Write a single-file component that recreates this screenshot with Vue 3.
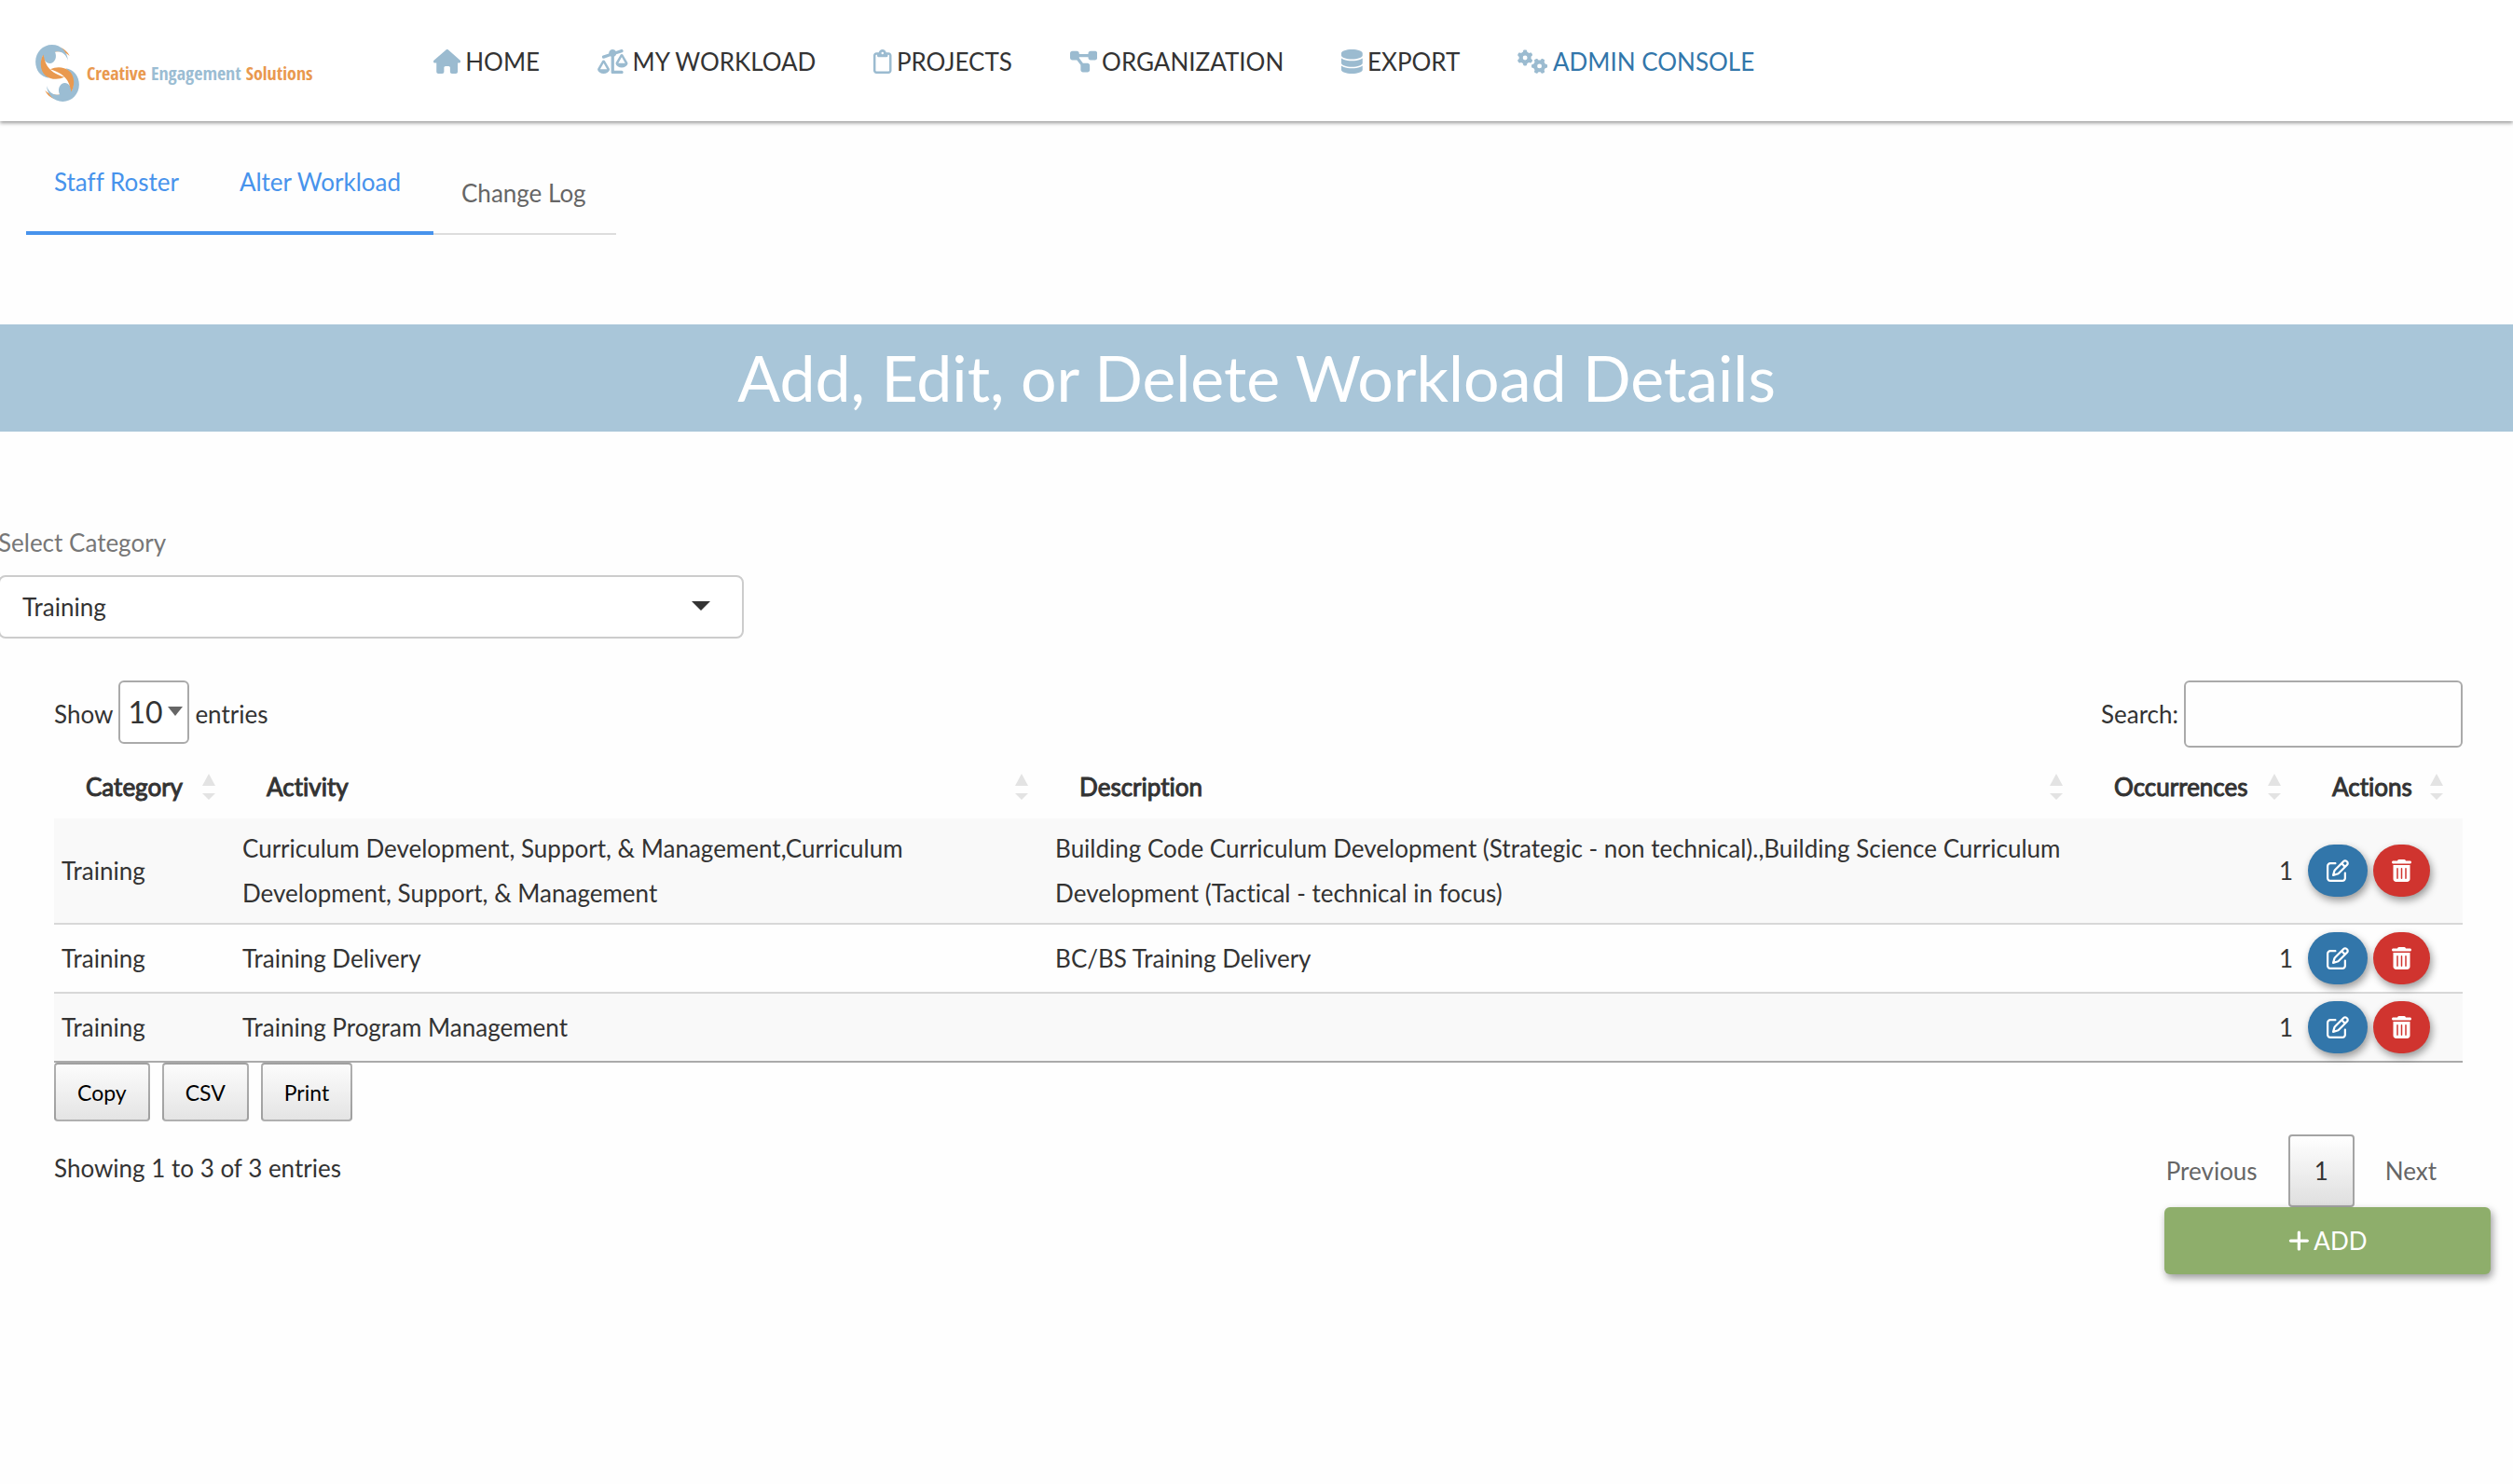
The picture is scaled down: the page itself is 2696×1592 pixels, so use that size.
<script setup>
import { ref } from 'vue'

const icons = {
  home: { w: 576, d: 'M575.8 255.5c0 18-15 32.1-32 32.1h-32l.7 160.2c0 2.7-.2 5.4-.5 8.1V472c0 22.1-17.9 40-40 40H456c-1.1 0-2.2 0-3.3-.1c-1.4 .1-2.8 .1-4.2 .1H416 392c-22.1 0-40-17.9-40-40V448 384c0-17.7-14.3-32-32-32H256c-17.7 0-32 14.3-32 32v64 24c0 22.1-17.9 40-40 40H160 128.1c-1.5 0-3-.1-4.5-.2c-1.2 .1-2.4 .2-3.6 .2H104c-22.1 0-40-17.9-40-40V360c0-.9 0-1.9 .1-2.8V287.6H32c-18 0-32-14-32-32.1c0-9 3-17 10-24L266.4 8c7-7 15-8 22-8s15 2 21 7L564.8 231.5c8 7 12 15 11 24z' },
  scale: { w: 640, d: 'M522.1 62.4c16.8-5.6 25.8-23.7 20.2-40.5S518.6-3.9 501.9 1.6l-113 37.7C375 15.8 349.3 0 320 0c-44.2 0-80 35.8-80 80c0 3 .2 5.9 .5 8.8L117.9 129.6c-16.8 5.6-25.8 23.7-20.2 40.5s23.7 25.8 40.5 20.2l135.5-45.2c4.5 3.2 9.3 5.9 14.4 8.2V480c0 17.7 14.3 32 32 32H512c17.7 0 32-14.3 32-32s-14.3-32-32-32H352V153.3c21-9.2 37.2-27 44.2-49l125.9-42zM439.6 288L512 163.8 584.4 288H439.6zM512 384c62.9 0 115.2-34 126-78.9c2.6-11-1-22.3-6.7-32.1L536.1 109.8c-5-8.6-14.2-13.8-24.1-13.8s-19.1 5.3-24.1 13.8L392.7 273.1c-5.7 9.8-9.3 21.1-6.7 32.1C396.8 350 449.1 384 512 384zM129.2 291.8L201.6 416H56.7l72.4-124.2zM3.2 433.1C14 478 66.3 512 129.2 512s115.2-34 126-78.9c2.6-11-1-22.3-6.7-32.1L153.2 237.8c-5-8.6-14.2-13.8-24.1-13.8s-19.1 5.3-24.1 13.8L9.9 401.1c-5.7 9.8-9.3 21.1-6.7 32.1z' },
  clipboard: { w: 384, d: 'M280 64h40c35.3 0 64 28.7 64 64V448c0 35.3-28.7 64-64 64H64c-35.3 0-64-28.7-64-64V128C0 92.7 28.7 64 64 64h40 9.6C121 27.5 153.3 0 192 0s71 27.5 78.4 64H280zM64 112c-8.8 0-16 7.2-16 16V448c0 8.8 7.2 16 16 16H320c8.8 0 16-7.2 16-16V128c0-8.8-7.2-16-16-16H304v24c0 13.3-10.7 24-24 24H192 104c-13.3 0-24-10.7-24-24V112H64zm128-8a24 24 0 1 0 0-48 24 24 0 1 0 0 48z' },
  diagram: { w: 576, d: 'M0 80C0 53.5 21.5 32 48 32h96c26.5 0 48 21.5 48 48V96H384V80c0-26.5 21.5-48 48-48h96c26.5 0 48 21.5 48 48v96c0 26.5-21.5 48-48 48H432c-26.5 0-48-21.5-48-48V160H192v16c0 1.7-.1 3.4-.3 5L272 288h96c26.5 0 48 21.5 48 48v96c0 26.5-21.5 48-48 48H272c-26.5 0-48-21.5-48-48V336c0-1.7 .1-3.4 .3-5L144 224H48c-26.5 0-48-21.5-48-48V80z' },
  database: { w: 448, d: 'M448 80v48c0 44.2-100.3 80-224 80S0 172.2 0 128V80C0 35.8 100.3 0 224 0S448 35.8 448 80zM393.2 214.7c20.8-7.4 39.9-16.9 54.8-28.6V288c0 44.2-100.3 80-224 80S0 332.2 0 288V186.1c14.9 11.8 34 21.2 54.8 28.6C99.7 230.7 159.5 240 224 240s124.3-9.3 169.2-25.3zM0 346.1c14.9 11.8 34 21.2 54.8 28.6C99.7 390.7 159.5 400 224 400s124.3-9.3 169.2-25.3c20.8-7.4 39.9-16.9 54.8-28.6V432c0 44.2-100.3 80-224 80S0 476.2 0 432V346.1z' },
  gears: { w: 640, d: 'M308.5 135.3c7.1-6.3 9.9-16.2 6.2-25c-2.3-5.3-4.8-10.5-7.6-15.5L304 89.4c-3-5-6.3-9.9-9.8-14.6c-5.7-7.6-15.7-10.1-24.7-7.1l-28.2 9.3c-10.7-8.8-23-16-36.2-20.9L199 27.1c-1.9-9.3-9.1-16.7-18.5-17.8C173.9 8.4 167.2 8 160.4 8h-.7c-6.8 0-13.5 .4-20.1 1.2c-9.4 1.1-16.6 8.6-18.5 17.8L115 56.1c-13.3 5-25.5 12.1-36.2 20.9L50.5 67.8c-9-3-19-.5-24.7 7.1c-3.5 4.7-6.8 9.6-9.9 14.6l-3 5.3c-2.8 5-5.3 10.2-7.6 15.6c-3.7 8.7-.9 18.6 6.2 25l22.2 19.8C32.6 161.9 32 168.9 32 176s.6 14.1 1.7 20.9L11.5 216.7c-7.1 6.3-9.9 16.2-6.2 25c2.3 5.3 4.8 10.5 7.6 15.6l3 5.2c3 5.1 6.3 9.9 9.9 14.6c5.7 7.6 15.7 10.1 24.7 7.1l28.2-9.3c10.7 8.8 23 16 36.2 20.9l6.1 29.1c1.9 9.3 9.1 16.7 18.5 17.8c6.7 .8 13.5 1.2 20.4 1.2s13.7-.4 20.4-1.2c9.4-1.1 16.6-8.6 18.5-17.8l6.1-29.1c13.3-5 25.5-12.1 36.2-20.9l28.2 9.3c9 3 19 .5 24.7-7.1c3.5-4.7 6.8-9.5 9.8-14.6l3.1-5.4c2.8-5 5.3-10.2 7.6-15.5c3.7-8.7 .9-18.6-6.2-25l-22.2-19.8c1.1-6.8 1.7-13.8 1.7-20.9s-.6-14.1-1.7-20.9l22.2-19.8zM112 176a48 48 0 1 1 96 0 48 48 0 1 1 -96 0zM504.7 500.5c6.3 7.1 16.2 9.9 25 6.2c5.3-2.3 10.5-4.8 15.5-7.6l5.4-3.1c5-3 9.9-6.3 14.6-9.8c7.6-5.7 10.1-15.7 7.1-24.7l-9.3-28.2c8.8-10.7 16-23 20.9-36.2l29.1-6.1c9.3-1.9 16.7-9.1 17.8-18.5c.8-6.7 1.2-13.5 1.2-20.4s-.4-13.7-1.2-20.4c-1.1-9.4-8.6-16.6-17.8-18.5L583.9 307c-5-13.3-12.1-25.5-20.9-36.2l9.3-28.2c3-9 .5-19-7.1-24.7c-4.7-3.5-9.6-6.8-14.6-9.9l-5.3-3c-5-2.8-10.2-5.3-15.6-7.6c-8.7-3.7-18.6-.9-25 6.2l-19.8 22.2c-6.8-1.1-13.8-1.7-20.9-1.7s-14.1 .6-20.9 1.7l-19.8-22.2c-6.3-7.1-16.2-9.9-25-6.2c-5.3 2.3-10.5 4.8-15.6 7.6l-5.2 3c-5.1 3-9.9 6.3-14.6 9.9c-7.6 5.7-10.1 15.7-7.1 24.7l9.3 28.2c-8.8 10.7-16 23-20.9 36.2L315.1 313c-9.3 1.9-16.7 9.1-17.8 18.5c-.8 6.7-1.2 13.5-1.2 20.4s.4 13.7 1.2 20.4c1.1 9.4 8.6 16.6 17.8 18.5l29.1 6.1c5 13.3 12.1 25.5 20.9 36.2l-9.3 28.2c-3 9-.5 19 7.1 24.7c4.7 3.5 9.5 6.8 14.6 9.8l5.4 3.1c5 2.8 10.2 5.3 15.5 7.6c8.7 3.7 18.6 .9 25-6.2l19.8-22.2c6.8 1.1 13.8 1.7 20.9 1.7s14.1-.6 20.9-1.7l19.8 22.2zM464 304a48 48 0 1 1 0 96 48 48 0 1 1 0-96z' },
  edit: { w: 512, d: 'M441 58.9L453.1 71c9.4 9.4 9.4 24.6 0 33.9L424 134.1 377.9 88 407 58.9c9.4-9.4 24.6-9.4 33.9 0zM209.8 256.2L344 121.9 390.1 168 255.8 302.2c-2.9 2.9-6.5 5-10.4 6.1l-58.5 16.7 16.7-58.5c1.1-3.9 3.2-7.5 6.1-10.4zM373.1 25L175.8 222.2c-8.7 8.7-15 19.4-18.3 31.1l-28.6 100c-2.4 8.4-.1 17.4 6.1 23.6s15.2 8.5 23.6 6.1l100-28.6c11.8-3.4 22.5-9.7 31.1-18.3L487 138.9c28.1-28.1 28.1-73.7 0-101.8L474.9 25C446.8-3.1 401.2-3.1 373.1 25zM88 64C39.4 64 0 103.4 0 152V424c0 48.6 39.4 88 88 88H360c48.6 0 88-39.4 88-88V312c0-13.3-10.7-24-24-24s-24 10.7-24 24V424c0 22.1-17.9 40-40 40H88c-22.1 0-40-17.9-40-40V152c0-22.1 17.9-40 40-40H200c13.3 0 24-10.7 24-24s-10.7-24-24-24H88z' },
  trash: { w: 448, d: 'M135.2 17.7L128 32H32C14.3 32 0 46.3 0 64S14.3 96 32 96H416c17.7 0 32-14.3 32-32s-14.3-32-32-32H320l-7.2-14.3C307.4 6.8 296.3 0 284.2 0H163.8c-12.1 0-23.2 6.8-28.6 17.7zM416 128H32V448c0 35.3 28.7 64 64 64H352c35.3 0 64-28.7 64-64V128zM144 208V432c0 8.8-7.2 16-16 16s-16-7.2-16-16V208c0-8.8 7.2-16 16-16s16 7.2 16 16zm96 0V432c0 8.8-7.2 16-16 16s-16-7.2-16-16V208c0-8.8 7.2-16 16-16s16 7.2 16 16zm96 0V432c0 8.8-7.2 16-16 16s-16-7.2-16-16V208c0-8.8 7.2-16 16-16s16 7.2 16 16z' },
  plus: { w: 448, d: 'M256 80c0-17.7-14.3-32-32-32s-32 14.3-32 32V224H48c-17.7 0-32 14.3-32 32s14.3 32 32 32H192V432c0 17.7 14.3 32 32 32s32-14.3 32-32V288H400c17.7 0 32-14.3 32-32s-14.3-32-32-32H256V80z' },
}

const nav = [
  { label: 'HOME', icon: icons.home },
  { label: 'MY WORKLOAD', icon: icons.scale },
  { label: 'PROJECTS', icon: icons.clipboard },
  { label: 'ORGANIZATION', icon: icons.diagram },
  { label: 'EXPORT', icon: icons.database },
  { label: 'ADMIN CONSOLE', icon: icons.gears, current: true },
]

const tabs = [
  { label: 'Staff Roster', active: true },
  { label: 'Alter Workload', active: true },
  { label: 'Change Log', active: false },
]

const columns = [
  { key: 'category', label: 'Category' },
  { key: 'activity', label: 'Activity' },
  { key: 'description', label: 'Description' },
  { key: 'occurrences', label: 'Occurrences' },
  { key: 'actions', label: 'Actions' },
]

const rows = [
  {
    category: 'Training',
    activity: 'Curriculum Development, Support, & Management,Curriculum Development, Support, & Management',
    description: 'Building Code Curriculum Development (Strategic - non technical).,Building Science Curriculum Development (Tactical - technical in focus)',
    occurrences: 1,
  },
  { category: 'Training', activity: 'Training Delivery', description: 'BC/BS Training Delivery', occurrences: 1 },
  { category: 'Training', activity: 'Training Program Management', description: '', occurrences: 1 },
]

const category = ref('Training')
const pageLength = ref('10')
const search = ref('')
</script>

<template>
  <div class="page">
    <header class="topbar">
      <a class="brand" href="#" aria-label="Creative Engagement Solutions">
        <svg class="brand-mark" viewBox="54 53 141 184" aria-hidden="true">
          <g v-for="turn in [0, 180]" :key="turn" :transform="`rotate(${turn} 124.5 145)`">
            <path fill="#e9994f" d="M131 61C146 65 158 75 164 89C152 78 138 71 104 77C112 70 124 68 138 71Z" />
            <path fill="#9bbdd3" d="M159 104C153 84 137 71 117 76C124 92 118 110 102 113C90 115 80 103 78 88C70 100 70 136 98 161C70 157 54 135 54 108C54 77 78 53 107 53C137 53 157 76 159 104Z" />
            <path fill="#e9994f" d="M79 85C86 112 90 140 147 158C118 172 72 163 71 117C71 104 74 94 79 85Z" />
          </g>
        </svg>
        <span class="brand-name"><span>Creative</span> <span class="blue">Engagement</span> <span>Solutions</span></span>
      </a>
      <nav class="nav">
        <a v-for="item in nav" :key="item.label" href="#" :class="{ current: item.current }">
          <svg class="nav-icon" :viewBox="`0 0 ${item.icon.w} 512`" aria-hidden="true"><path :d="item.icon.d" /></svg>
          <span>{{ item.label }}</span>
        </a>
      </nav>
    </header>

    <nav class="tabs">
      <a v-for="tab in tabs" :key="tab.label" href="#" :class="{ active: tab.active }">{{ tab.label }}</a>
    </nav>

    <h1 class="banner">Add, Edit, or Delete Workload Details</h1>

    <div class="field">
      <label for="category">Select Category</label>
      <div class="picker">
        <select id="category" v-model="category">
          <option>Training</option>
        </select>
        <svg class="picker-arrow" viewBox="0 0 20 10" aria-hidden="true"><path d="M0 0H20L10 10Z" /></svg>
      </div>
    </div>

    <main class="listing">
      <div class="controls">
        <div class="length">
          <label for="length">Show</label>
          <div class="picker small">
            <select id="length" v-model="pageLength">
              <option>10</option>
              <option>25</option>
            </select>
            <svg class="picker-arrow" viewBox="0 0 20 10" preserveAspectRatio="none" aria-hidden="true"><path d="M0 0H20L10 10Z" /></svg>
          </div>
          <span>entries</span>
        </div>
        <div class="search">
          <label for="search">Search:</label>
          <input id="search" v-model="search" type="search">
        </div>
      </div>

      <table>
        <colgroup>
          <col v-for="col in columns" :key="col.key" :class="`col-${col.key}`">
        </colgroup>
        <thead>
          <tr>
            <th v-for="col in columns" :key="col.key" scope="col">
              <div class="head">
                <span>{{ col.label }}</span>
                <svg class="sort" viewBox="0 0 14 28" aria-hidden="true"><path d="M7 0L14 13H0ZM0 21H14L7 28Z" /></svg>
              </div>
            </th>
          </tr>
        </thead>
        <tbody>
          <tr v-for="(row, i) in rows" :key="i">
            <td>{{ row.category }}</td>
            <td>{{ row.activity }}</td>
            <td>{{ row.description }}</td>
            <td class="number">{{ row.occurrences }}</td>
            <td>
              <div class="actions">
                <button type="button" class="edit" aria-label="Edit">
                  <svg :viewBox="`0 0 ${icons.edit.w} 512`"><path :d="icons.edit.d" /></svg>
                </button>
                <button type="button" class="delete" aria-label="Delete">
                  <svg :viewBox="`0 0 ${icons.trash.w} 512`"><path :d="icons.trash.d" /></svg>
                </button>
              </div>
            </td>
          </tr>
        </tbody>
      </table>

      <div class="exports">
        <button v-for="name in ['Copy', 'CSV', 'Print']" :key="name" type="button">{{ name }}</button>
      </div>

      <div class="footer">
        <div class="info">Showing 1 to 3 of 3 entries</div>
        <nav class="pages">
          <a href="#">Previous</a>
          <a href="#" class="on">1</a>
          <a href="#">Next</a>
        </nav>
      </div>
    </main>

    <div class="add-row">
      <button type="button" class="add">
        <svg :viewBox="`0 0 ${icons.plus.w} 512`" aria-hidden="true"><path :d="icons.plus.d" /></svg>
        <span>ADD</span>
      </button>
    </div>
  </div>
</template>

<style>
body {
  margin: 0;
  background: #fefefe;
}
</style>

<style scoped>
* {
  box-sizing: border-box;
}

.page {
  font-family: Lato, "Liberation Sans", sans-serif;
  font-size: 26px;
  font-variant-ligatures: none;
  line-height: 48px;
  color: #333;
}

a {
  color: inherit;
  text-decoration: none;
}

button,
select,
input {
  font: inherit;
  color: inherit;
}

button {
  cursor: pointer;
}

.topbar {
  display: flex;
  align-items: flex-start;
  height: 130px;
  background: #fff;
  box-shadow: 0 2px 4px rgba(0, 0, 0, 0.4);
}

.brand {
  display: flex;
  flex: 0 0 433px;
  align-items: center;
  gap: 8px;
  padding: 48px 0 0 38px;
}

.brand-mark {
  width: 47px;
  height: 61px;
}

.brand-name {
  font-family: "Open Sans Condensed", "Liberation Sans Narrow", Lato, sans-serif;
  font-size: 20px;
  font-weight: 300;
  line-height: 24px;
  color: #e9994f;
  white-space: nowrap;
}

.brand-name .blue {
  color: #9bbdd3;
}

.nav {
  display: flex;
  padding-top: 42px;
}

.nav a {
  display: flex;
  align-items: center;
  gap: 5px;
  padding: 0 30px 0 32px;
  white-space: nowrap;
}

.nav a.current {
  color: #3276aa;
}

.nav-icon {
  height: 26px;
  fill: #9bbbd0;
}

.tabs {
  display: flex;
  align-items: flex-end;
  padding: 41px 28px 0;
}

.tabs a {
  padding: 0 32px 19px 30px;
  border-bottom: 2px solid #ddd;
  color: #666;
}

.tabs a.active {
  padding: 0 35px 29px 30px;
  border-bottom: 4px solid #4793ec;
  color: #4793ec;
}

.banner {
  margin: 96px 0 0;
  padding-bottom: 2px;
  background: #a9c6d9;
  color: #fff;
  font-size: 68px;
  font-weight: 400;
  line-height: 113px;
  text-align: center;
}

.field {
  width: 800px;
  margin: 95px 0 0 -2px;
}

.field label {
  display: block;
  margin-bottom: 11px;
  color: #777;
}

.picker {
  position: relative;
}

.picker select {
  display: block;
  width: 100%;
  height: 68px;
  padding: 0 24px;
  border: 2px solid #ccc;
  border-radius: 8px;
  background: #fff;
  appearance: none;
}

.picker-arrow {
  position: absolute;
  top: 28px;
  right: 36px;
  width: 20px;
  height: 10px;
  fill: #333;
  pointer-events: none;
}

.picker.small select {
  width: 76px;
  padding: 0 8px;
  border-color: #aaa;
  border-radius: 6px;
  font-size: 32px;
}

.picker.small .picker-arrow {
  right: 7px;
  width: 16px;
  fill: #666;
}

.listing {
  padding: 45px 54px 0 58px;
}

.controls {
  display: flex;
  align-items: flex-start;
  justify-content: space-between;
}

.length {
  display: flex;
  align-items: baseline;
  gap: 6px;
}

.search {
  display: flex;
  align-items: center;
  gap: 6px;
}

.search input {
  width: 299px;
  height: 72px;
  padding: 0 10px;
  border: 2px solid #aaa;
  border-radius: 6px;
  background: transparent;
  appearance: none;
}

table {
  width: 100%;
  margin-top: 8px;
  border-collapse: separate;
  border-spacing: 0;
  border-bottom: 2px solid #aaa;
  table-layout: fixed;
}

.col-category {
  width: 194px;
}

.col-activity {
  width: 33.75%;
}

.col-occurrences {
  width: 234px;
}

.col-actions {
  width: 174px;
}

th {
  padding: 10px 21px 10px 34px;
  font-weight: 400;
  text-align: left;
  -webkit-text-stroke: 1px #333;
}

.head {
  display: flex;
  align-items: center;
  justify-content: space-between;
}

.sort {
  width: 14px;
  height: 28px;
  fill: #e3e3e3;
}

td {
  padding: 8px;
  vertical-align: middle;
}

tbody tr:nth-child(odd) {
  background: #f9f9f9;
}

tbody tr + tr td {
  border-top: 2px solid #d8d8d8;
}

.number {
  text-align: right;
}

.actions {
  display: flex;
  gap: 6px;
}

.actions button {
  display: flex;
  align-items: center;
  height: 56px;
  padding: 0 20px;
  border: 0;
  border-radius: 28px;
  box-shadow: 2px 4px 8px rgba(0, 0, 0, 0.4);
}

.actions svg {
  height: 24px;
  fill: #fff;
}

.actions .edit {
  background: #3276aa;
}

.actions .delete {
  background: #d0342f;
}

.exports {
  display: flex;
  gap: 13px;
}

.exports button {
  height: 63px;
  padding: 0 23px;
  border: 2px solid rgba(0, 0, 0, 0.3);
  border-radius: 4px;
  background: linear-gradient(#fcfcfc, #e4e4e4);
  color: #000;
  font-size: 23px;
}

.footer {
  display: flex;
  align-items: flex-start;
  justify-content: space-between;
  margin-top: 14px;
}

.info {
  padding-top: 12px;
}

.pages {
  display: flex;
  gap: 5px;
}

.pages a {
  padding: 13px 26px;
  border: 2px solid transparent;
  border-radius: 4px;
  color: #666;
}

.pages a.on {
  border-color: #a4a4a4;
  background: linear-gradient(#fff, #dfdfdf);
  color: #333;
}

.add-row {
  display: flex;
  justify-content: flex-end;
  padding: 0 24px 24px 0;
}

.add {
  display: flex;
  align-items: center;
  justify-content: center;
  gap: 5px;
  width: 350px;
  height: 72px;
  border: 0;
  border-radius: 6px;
  background: #8eae6b;
  box-shadow: 2px 4px 8px rgba(0, 0, 0, 0.4);
  color: #fff;
}

.add svg {
  height: 26px;
  fill: #fff;
}
</style>
